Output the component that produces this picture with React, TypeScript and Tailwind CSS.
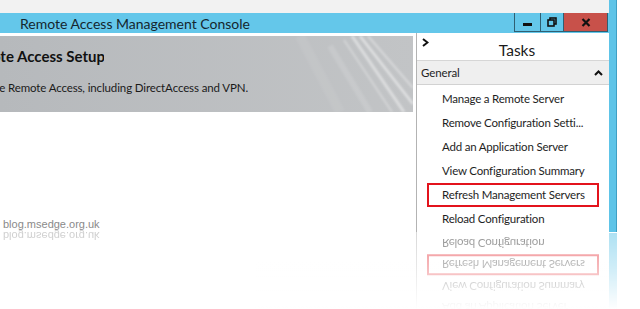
import React from "react"

const tasks = [
  "Manage a Remote Server",
  "Remove Configuration Setti...",
  "Add an Application Server",
  "View Configuration Summary",
  "Refresh Management Servers",
  "Reload Configuration",
]

const HIGHLIGHT = "Refresh Management Servers"

function TaskRow({ label, flipped = false }: { label: string; flipped?: boolean }) {
  const boxed = label === HIGHLIGHT
  return (
    <div
      className={`mx-[10px] h-[24px] flex items-center pl-[13px] border-2 whitespace-nowrap text-[11.5px] tracking-[-0.2px] ${
        boxed ? "border-[#e3131c]" : "border-transparent"
      } ${flipped ? "-scale-y-100" : ""}`}
    >
      {label}
    </div>
  )
}

function TitleButtons() {
  return (
    <div className="flex h-[19px] border border-t-0 border-[#2f5f72]">
      <div className="w-[26px] flex items-end justify-center pb-[5px] border-r border-[#2f5f72]">
        <div className="w-[9px] h-[3px] bg-[#111]" />
      </div>
      <div className="w-[23px] flex items-center justify-center border-r border-[#2f5f72]">
        <svg width="10" height="10" viewBox="0 0 10 10">
          <rect x="3" y="1" width="6" height="6" fill="none" stroke="#111" strokeWidth="1.6" />
          <rect x="1" y="3" width="6" height="6" fill="#64c7ea" stroke="#111" strokeWidth="1.6" />
        </svg>
      </div>
      <div className="w-[43px] flex items-center justify-center bg-[#c8514a]">
        <svg width="10" height="9" viewBox="0 0 10 9">
          <path d="M1.5 1 L8.5 8 M8.5 1 L1.5 8" stroke="#111" strokeWidth="2.2" />
        </svg>
      </div>
    </div>
  )
}

function Banner() {
  return (
    <div className="relative w-[413px] h-[76px] overflow-hidden bg-gradient-to-r from-[#b6b9bc] to-[#c2c4c6]">
      {/* light streaks */}
      <svg className="absolute inset-0" width="413" height="76" viewBox="0 0 413 76">
        <defs>
          <filter id="soft">
            <feGaussianBlur stdDeviation="1.2" />
          </filter>
        </defs>
        <g filter="url(#soft)" stroke="#fff" fill="none">
          <path d="M352 0 L404 76" strokeWidth="3" opacity="0.45" />
          <path d="M360 0 L413 68" strokeWidth="2.5" opacity="0.5" />
          <path d="M344 4 L392 76" strokeWidth="2" opacity="0.3" />
          <path d="M368 0 L413 52" strokeWidth="2" opacity="0.35" />
          <path d="M330 10 L370 76" strokeWidth="6" opacity="0.12" />
          <path d="M300 0 L340 76" strokeWidth="10" opacity="0.06" />
        </g>
      </svg>
      <div className="relative flex flex-col">
        <div className="flex justify-end w-[104px] overflow-hidden whitespace-nowrap mt-[9px] h-[22px] items-center">
          <span className="text-[15px] font-bold text-[#111] -mr-[1px]">Remote Access Setup</span>
        </div>
        <div className="flex justify-end w-[248px] overflow-hidden whitespace-nowrap mt-[13px] h-[16px] items-center">
          <span className="text-[11.5px] tracking-[-0.12px] text-[#1a1a1a]">
            Configure Remote Access, including DirectAccess and VPN.
          </span>
        </div>
      </div>
    </div>
  )
}

export default function App() {
  const reflected = [...tasks].reverse().slice(0, 4)

  return (
    <div className="relative w-[640px] h-[309px] overflow-hidden bg-white text-[#1e1e1e] font-['Lato','Open_Sans',sans-serif]">
      {/* window */}
      <div className="flex w-[617px]">
        <div className="flex-1 flex flex-col">
          {/* strip above the title bar */}
          <div className="h-[13px] bg-[#f2f2f2]" />

          {/* title bar */}
          <div className="h-[20px] bg-[#64c7ea] flex items-start pr-[1px]">
            <div className="pl-[20px] pt-[1px] text-[14px] leading-[20px] text-[#15262e]">
              Remote Access Management Console
            </div>
            <div className="ml-auto">
              <TitleButtons />
            </div>
          </div>

          {/* body */}
          <div className="h-[199px] flex bg-white">
            <div className="w-[416px] pt-[3px]">
              <Banner />
            </div>
            <div className="flex-1 flex flex-col border-l border-[#b3b3b3]">
              <div className="h-[28px] relative flex items-end justify-center pl-[8px] border-b border-[#d6d6d6]">
                <svg className="absolute left-[5px] top-[5px]" width="7" height="9" viewBox="0 0 7 9">
                  <path d="M1 1 L5.5 4.5 L1 8" stroke="#111" strokeWidth="2" fill="none" />
                </svg>
                <span className="text-[15.5px] leading-[20px] text-[#1a1a1a]">Tasks</span>
              </div>
              <div className="h-[24px] flex items-center justify-between pl-[4px] pr-[6px] bg-[#efefef] border-b border-[#d2d2d2]">
                <span className="text-[11.5px] tracking-[-0.1px]">General</span>
                <svg width="9" height="6" viewBox="0 0 9 6">
                  <path d="M1 5 L4.5 1.5 L8 5" stroke="#111" strokeWidth="2" fill="none" />
                </svg>
              </div>
              <div className="flex flex-col pt-[2px]">
                {tasks.map((t) => (
                  <TaskRow key={t} label={t} />
                ))}
              </div>
            </div>
          </div>
        </div>
        {/* right frame */}
        <div className="w-[8px] bg-[#5ec4e8] border-r border-[#3f9fc4]" />
      </div>

      {/* reflection */}
      <div className="relative flex w-[617px] h-[77px] opacity-50">
        <div className="w-[416px]" />
        <div className="flex-1 flex flex-col pt-[1px] border-l border-[#b3b3b3]">
          {reflected.map((t) => (
            <TaskRow key={t} label={t} flipped />
          ))}
        </div>
        <div className="w-[8px] mt-[1px] bg-[#5ec4e8]" />
        <div className="absolute inset-0 bg-gradient-to-b from-white/0 via-white/45 to-white" />
      </div>

      {/* watermark */}
      <div className="absolute left-[3px] top-[218px] flex flex-col font-['Liberation_Sans',sans-serif] text-[11px] leading-[12px]">
        <span className="text-[#8a8a8a]">blog.msedge.org.uk</span>
        <span className="text-[#d0d0d0] -scale-y-100">blog.msedge.org.uk</span>
      </div>
    </div>
  )
}
